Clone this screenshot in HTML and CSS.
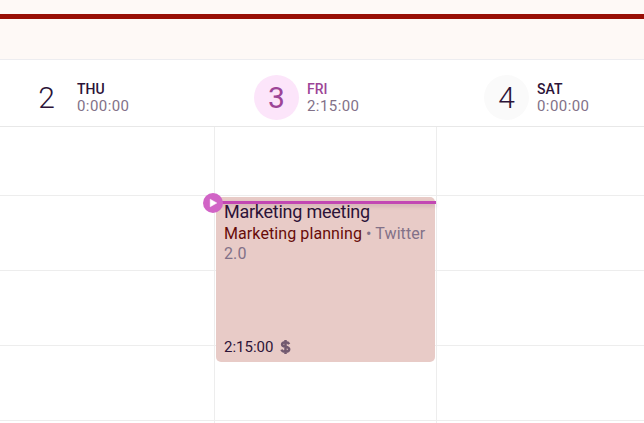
FILE: index.html
```html
<!DOCTYPE html>
<html lang="en">
<head>
<meta charset="utf-8">
<title>Calendar</title>
<link rel="stylesheet" href="styles.css">
</head>
<body>
<div class="calendar">
  <div class="banner"><div class="banner-line"></div></div>
  <header class="days">
    <div class="day">
      <div class="date">2</div>
      <div class="info"><div class="name">THU</div><div class="total">0:00:00</div></div>
    </div>
    <div class="day today">
      <div class="date">3</div>
      <div class="info"><div class="name">FRI</div><div class="total">2:15:00</div></div>
    </div>
    <div class="day weekend">
      <div class="date">4</div>
      <div class="info"><div class="name">SAT</div><div class="total">0:00:00</div></div>
    </div>
  </header>
  <main class="grid">
    <div class="column"><div class="slot first"></div><div class="slot"></div><div class="slot"></div><div class="slot"></div></div>
    <div class="column">
      <div class="slot first"></div><div class="slot"></div><div class="slot"></div><div class="slot"></div>
      <article class="event">
        <div class="title">Marketing meeting</div>
        <div class="project"><span class="project-name">Marketing planning</span> <span>• Twitter</span> <span>2.0</span></div>
        <footer class="event-footer"><span>2:15:00</span><svg class="dollar" viewBox="0 0 11 16"><path d="M9.2 5.1C8.6 3.9 7.4 3.3 5.5 3.3C3.5 3.3 2.1 4.1 2.1 5.6C2.1 8.7 9.2 6.9 9.2 10.3C9.2 11.9 7.7 12.7 5.5 12.7C3.3 12.7 2 12 1.5 10.6M5.5 1V15"/></svg></footer>
      </article>
      <div class="now-line"></div>
      <svg class="now-button" viewBox="0 0 20 20"><circle cx="10" cy="10" r="10"/><path d="M7.2 6.2L13.8 10L7.2 13.8Z"/></svg>
    </div>
    <div class="column"><div class="slot first"></div><div class="slot"></div><div class="slot"></div><div class="slot"></div></div>
  </main>
</div>
</body>
</html>
```
FILE: styles.css
```css
* { box-sizing: border-box; }
body { margin: 0; background: #fff; color: #2c1338; font-family: Roboto, "Liberation Sans", sans-serif; }
.calendar { width: 644px; height: 423px; overflow: hidden; }
.banner { height: 60px; padding-top: 14px; background: #fef9f6; border-bottom: 1px solid #ededf0; }
.banner-line { height: 5px; background: #990f05; }
.days { display: grid; grid-template-columns: 230px 230px 184px; height: 67px; border-bottom: 1px solid #e8e8e8; }
.day { display: flex; gap: 8px; padding: 15px 0 0 24px; }
.date { width: 45px; height: 45px; border-radius: 50%; font-size: 30px; font-weight: 300; line-height: 45px; text-align: center; }
.info { padding-top: 6px; }
.name { font-size: 14px; font-weight: 500; line-height: 16px; }
.total { font-size: 15px; line-height: 18px; letter-spacing: .43px; color: #827188; }
.today .date { background: #fce5fa; color: #9d4597; font-weight: 400; }
.today .name { color: #9d4597; }
.weekend .date { background: #fafafa; }
.grid { display: grid; grid-template-columns: 215px 222px 207px; height: 296px; }
.column { position: relative; border-right: 1px solid #ededed; }
.column:last-child { border-right: 0; }
.slot { height: 75px; border-bottom: 1px solid #ededed; }
.slot.first { height: 69px; }
.event { position: absolute; top: 70px; left: 1px; display: flex; flex-direction: column; width: 219px; height: 165px; padding: 5px 8px; border-radius: 5px; background: #e8cbc7; }
.title { font-size: 18px; line-height: 20px; letter-spacing: -.25px; }
.project { padding-top: 2px; color: #827188; font-size: 16px; line-height: 20px; letter-spacing: .09px; }
.project-name { color: #670b09; }
.event-footer { display: flex; align-items: center; gap: 7px; height: 20px; margin-top: auto; font-size: 15px; }
.dollar { width: 11px; height: 16px; fill: none; stroke: #725a70; stroke-width: 2.5; }
.now-line { position: absolute; top: 74px; left: 0; width: 221px; height: 3px; background: #c247b3; box-shadow: 0 2px 4px rgba(70, 20, 60, .18); }
.now-button { position: absolute; top: 66px; left: -12px; width: 20px; height: 20px; fill: #d164c6; }
.now-button path { fill: #fff; stroke: #fff; stroke-width: .5; stroke-linejoin: round; }
```
